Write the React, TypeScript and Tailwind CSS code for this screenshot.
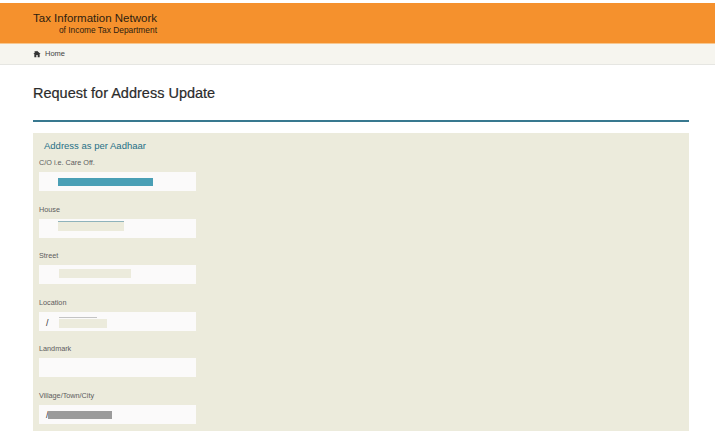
import type { ReactNode } from 'react';

function Field({ label, children }: { label: string; children?: ReactNode }) {
  return (
    <div className="h-[46.5px]">
      <div className="h-[16px] text-[7.25px] leading-[13px] text-[#5c5c5c]">{label}</div>
      <div className="flex h-[19px] w-[157px] items-start bg-[#fbfafa] pl-[7px]">{children}</div>
    </div>
  );
}

export default function App() {
  return (
    <div className="h-[431px] w-[715px] overflow-hidden bg-white font-['Liberation_Sans',Arial,sans-serif]">
      <div className="mt-[3px] h-[41px] border-b border-[#f7c78f] bg-[#f5912d] pl-[33px] pt-[8px] text-[#2e2110]">
        <div className="w-[124px] text-right">
          <div className="whitespace-nowrap text-[11.5px] leading-[14px]">Tax Information Network</div>
          <div className="whitespace-nowrap text-[8.4px] leading-[10px]">of Income Tax Department</div>
        </div>
      </div>

      <div className="flex h-[21px] items-center gap-[4px] border-b border-[#e6e6e2] bg-[#f6f5ef] pl-[33px]">
        <svg width="8" height="8" viewBox="0 0 24 24" fill="#333">
          <path d="M12 2 8 5.6V3H5v5.3L1 12h3v10h6v-7h4v7h6V12h3z" />
        </svg>
        <span className="text-[7.5px] text-[#444]">Home</span>
      </div>

      <div className="pl-[33px] pr-[26px]">
        <h1 className="mt-[19px] text-[14.5px] font-normal leading-[18px] text-[#2b2b2b] [-webkit-text-stroke:0.2px_#2b2b2b]">
          Request for Address Update
        </h1>
        <div className="mt-[18px] h-[2px] bg-[#38788f]" />

        <div className="mt-[11px] h-[320px] bg-[#ecebdc] pl-[6px] pt-[6px]">
          <div className="h-[13px] pl-[5px] text-[9.5px] leading-[13px] text-[#1f6f86]">Address as per Aadhaar</div>
          <div className="mt-[4px]">
            <Field label="C/O i.e. Care Off.">
              <div className="ml-[12px] mt-[6px] h-[8px] w-[95px] bg-[#4a9fb5]" />
            </Field>
            <Field label="House">
              <div className="ml-[12px] mt-[2px] h-[10px] w-[66px] border-t border-[#8fb3bb] bg-[#ecebdc]" />
            </Field>
            <Field label="Street">
              <div className="ml-[13px] mt-[4px] h-[9px] w-[72px] bg-[#ecebdc]" />
            </Field>
            <Field label="Location">
              <span className="mt-[6px] w-[13px] text-[9px] leading-[10px] text-[#333]">/</span>
              <div className="mt-[5px]">
                <div className="h-[1px] w-[38px] bg-[#c4c4c4]" />
                <div className="mt-[1px] h-[9px] w-[48px] bg-[#ecebdc]" />
              </div>
            </Field>
            <Field label="Landmark" />
            <Field label="Village/Town/City">
              <span className="mt-[5px] w-[2px] text-[9px] leading-[10px] text-[#333]">/</span>
              <div className="mt-[6px] h-[8px] w-[64px] bg-[#9b9b9b]" />
            </Field>
          </div>
        </div>
      </div>
    </div>
  );
}
